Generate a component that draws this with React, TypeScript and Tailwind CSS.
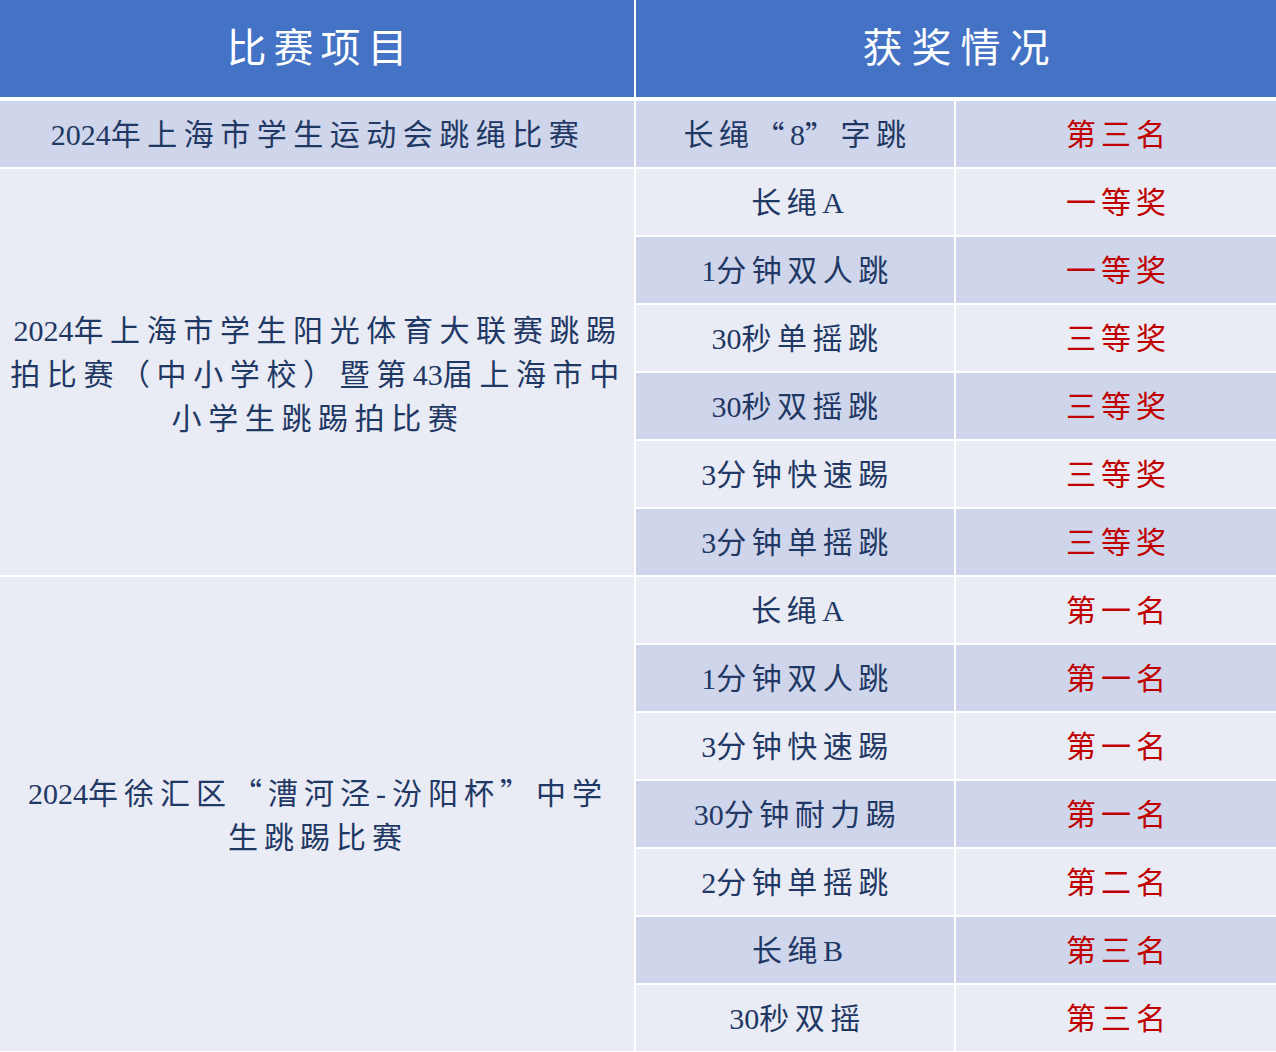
const CJK = "font-['Liberation_Serif','Noto_Sans_CJK_SC',serif]";

type Row = { item: string; award: string };

const rows: Row[] = [
  { item: "长绳“8”字跳", award: "第三名" },
  { item: "长绳A", award: "一等奖" },
  { item: "1分钟双人跳", award: "一等奖" },
  { item: "30秒单摇跳", award: "三等奖" },
  { item: "30秒双摇跳", award: "三等奖" },
  { item: "3分钟快速踢", award: "三等奖" },
  { item: "3分钟单摇跳", award: "三等奖" },
  { item: "长绳A", award: "第一名" },
  { item: "1分钟双人跳", award: "第一名" },
  { item: "3分钟快速踢", award: "第一名" },
  { item: "30分钟耐力踢", award: "第一名" },
  { item: "2分钟单摇跳", award: "第二名" },
  { item: "长绳B", award: "第三名" },
  { item: "30秒双摇", award: "第三名" },
];

// digits/latin stay tight, quotes use the CJK face so they come out full width
const renderText = (text: string) =>
  text.split(/([0-9A-Z]+|[“”])/).map((part, i) => {
    if (part === "“" || part === "”")
      return (
        <span key={i} className="font-['Noto_Sans_CJK_SC',sans-serif]">
          {part}
        </span>
      );
    if (/^[0-9A-Z]+$/.test(part))
      return (
        <span key={i} className="tracking-normal">
          {part}
        </span>
      );
    return <span key={i}>{part}</span>;
  });

const App = () => {
  return (
    <div className={`w-[1276px] h-[1052px] bg-white ${CJK} text-[#1f3864]`}>
      {/* Header */}
      <div className="flex gap-[2px] h-[97px]">
        <div className="w-[634px] bg-[#4472c4] flex items-center justify-center text-white text-[40px] tracking-[7px] pl-[7px]">
          比赛项目
        </div>
        <div className="w-[640px] bg-[#4472c4] flex items-center justify-center text-white text-[40px] tracking-[9px] pl-[9px]">
          获奖情况
        </div>
      </div>

      {/* Body */}
      <div className="mt-[4px] grid grid-cols-[634px_318px_320px] auto-rows-[66px] gap-[2px] text-[30px]">
        {rows.map((row, i) => {
          const bg = i % 2 === 0 ? "bg-[#cfd5ea]" : "bg-[#e9ebf5]";
          return [
            i === 0 && (
              <div key="g0" className="bg-[#cfd5ea] flex items-center justify-center tracking-[6.5px] pl-[2px]">
                {renderText("2024年上海市学生运动会跳绳比赛")}
              </div>
            ),
            i === 1 && (
              <div
                key="g1"
                className="row-span-6 bg-[#e9ebf5] flex items-center justify-center text-center leading-[44px] tracking-[6.6px] pl-[2px]"
              >
                <div className="mt-[6px] whitespace-nowrap">
                  {renderText("2024年上海市学生阳光体育大联赛跳踢")}
                  <br />
                  {renderText("拍比赛（中小学校）暨第43届上海市中")}
                  <br />
                  小学生跳踢拍比赛
                </div>
              </div>
            ),
            i === 7 && (
              <div
                key="g2"
                className="row-span-7 bg-[#e9ebf5] flex items-center justify-center text-center leading-[44px] tracking-[6px] pl-[2px]"
              >
                <div className="whitespace-nowrap">
                  {renderText("2024年徐汇区“漕河泾-汾阳杯”中学")}
                  <br />
                  生跳踢比赛
                </div>
              </div>
            ),
            <div key={`a${i}`} className={`${bg} flex items-center justify-center tracking-[5.5px] pl-[5px]`}>
              {renderText(row.item)}
            </div>,
            <div key={`b${i}`} className={`${bg} flex items-center justify-center tracking-[5px] pl-[5px] text-[#c00000]`}>
              {row.award}
            </div>,
          ];
        })}
      </div>
    </div>
  );
};

export default App;
